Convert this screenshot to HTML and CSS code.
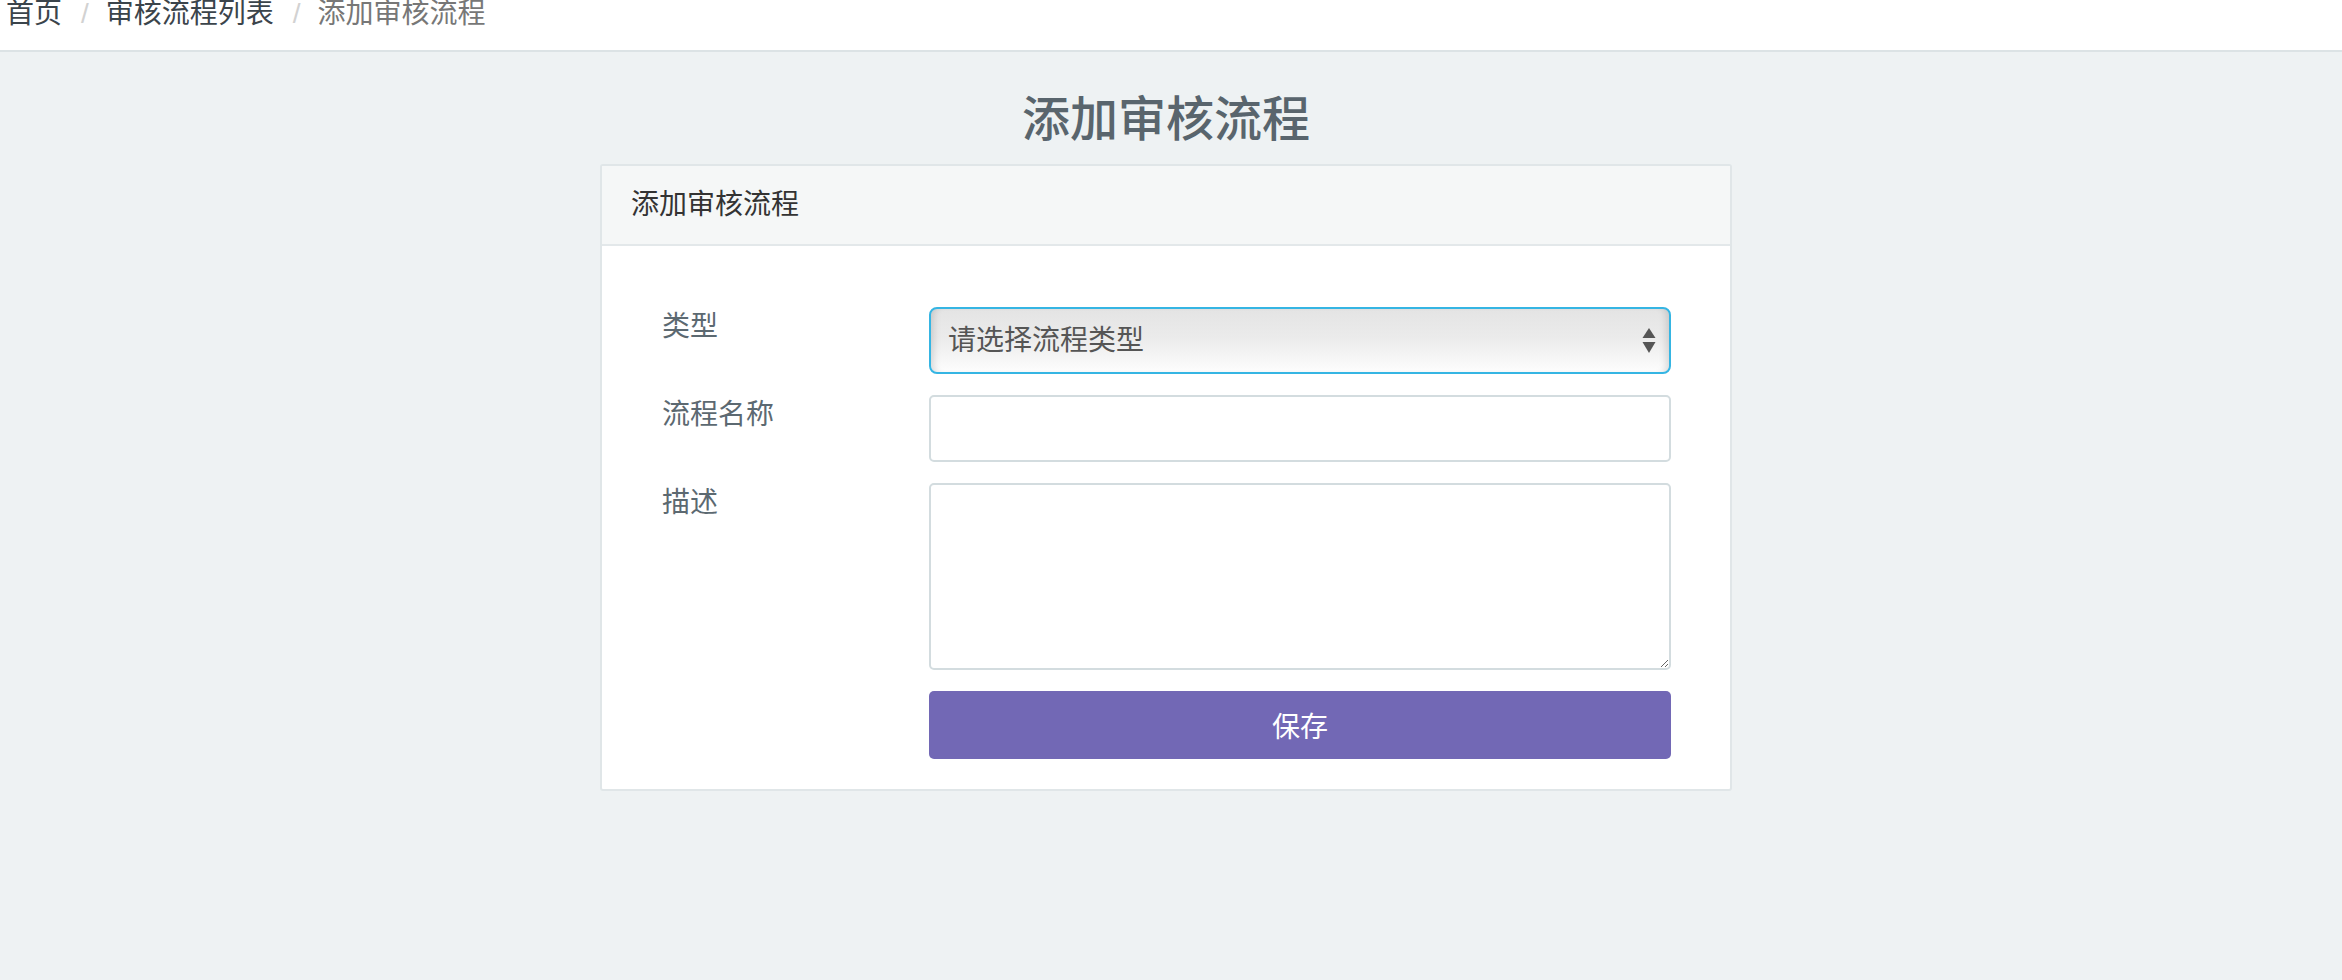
FILE: index.html
```html
<!DOCTYPE html>
<html lang="zh-CN">
<head>
    <meta charset="UTF-8">
    <meta name="viewport" content="width=device-width, initial-scale=1.0">
    <title>添加审核流程</title>
    <link rel="stylesheet" href="styles.css">
</head>
<body>
    <header class="topbar">
        <ol class="breadcrumb">
            <li><a href="#">首页</a></li>
            <li><a href="#">审核流程列表</a></li>
            <li class="active">添加审核流程</li>
        </ol>
    </header>

    <main class="page">
        <h1 class="page-title">添加审核流程</h1>

        <div class="panel">
            <div class="panel-heading">添加审核流程</div>
            <form class="panel-body" onsubmit="return false">
                <div class="form-row">
                    <label class="form-label" for="type">类型</label>
                    <div class="select-wrap">
                        <select id="type" class="form-select">
                            <option>请选择流程类型</option>
                        </select>
                        <svg class="select-arrows" width="14" height="26" viewBox="0 0 14 26">
                            <path d="M7 0 L13.5 10 L0.5 10 Z" fill="#555"/>
                            <path d="M0.5 14 L13.5 14 L7 25 Z" fill="#555"/>
                        </svg>
                    </div>
                </div>
                <div class="form-row">
                    <label class="form-label" for="name">流程名称</label>
                    <input id="name" class="form-input" type="text">
                </div>
                <div class="form-row">
                    <label class="form-label" for="desc">描述</label>
                    <textarea id="desc" class="form-input form-textarea"></textarea>
                </div>
                <div class="form-row">
                    <span class="form-label"></span>
                    <button class="btn-save" type="submit">保存</button>
                </div>
            </form>
        </div>
    </main>
</body>
</html>
```

FILE: styles.css
```css
* {
    margin: 0;
    padding: 0;
    box-sizing: border-box;
}
html, body {
    width: 100%;
    height: 100%;
}
body {
    background: #eef2f3;
    font-family: "Liberation Sans", "Noto Sans CJK SC", sans-serif;
    font-size: 28px;
    color: #333;
    overflow: hidden;
}

/* top breadcrumb bar */
.topbar {
    height: 52px;
    background: #fff;
    border-bottom: 2px solid #dce3e5;
}
.breadcrumb {
    display: flex;
    list-style: none;
    line-height: 28px;
    padding-left: 6px;
}
.breadcrumb a {
    color: #3b444b;
    text-decoration: none;
}
.breadcrumb li + li::before {
    content: "/";
    display: inline-block;
    padding: 0 17px 0 19px;
    color: #d2d2d2;
}
.breadcrumb .active {
    color: #777;
}

/* page */
.page {
    width: 1132px;
    margin-left: 600px;
}
.page-title {
    font-size: 48px;
    font-weight: 500;
    line-height: 58px;
    color: #59656d;
    text-align: center;
    margin: 39px 0 15px;
}

.panel {
    background: #fff;
    border: 2px solid #e0e6e8;
    border-radius: 3px;
}
.panel-heading {
    background: #f5f7f7;
    border-bottom: 2px solid #e3e8ea;
    padding: 19px 29px;
    line-height: 40px;
    color: #333;
}
.panel-body {
    display: flex;
    flex-direction: column;
    gap: 21px;
    padding: 61px 59px 30px 60px;
}
.form-row {
    display: grid;
    grid-template-columns: 267px 742px;
}
.form-label {
    line-height: 40px;
    color: #5c6971;
}

.select-wrap {
    position: relative;
}
.form-select {
    appearance: none;
    -webkit-appearance: none;
    display: block;
    width: 100%;
    height: 67px;
    padding: 0 50px 0 17px;
    font: inherit;
    color: #555;
    border: 2px solid #35b5e3;
    border-radius: 8px;
    outline: none;
    background: linear-gradient(#e4e4e4, #ebebeb 45%, #fdfdfd);
    box-shadow: inset 8px 0 7px -5px rgba(0, 0, 0, 0.13), inset -8px 0 7px -5px rgba(0, 0, 0, 0.13);
}
.select-arrows {
    position: absolute;
    right: 15px;
    top: 21px;
    pointer-events: none;
}

.form-input {
    display: block;
    width: 100%;
    height: 67px;
    padding: 0 17px;
    font: inherit;
    color: #555;
    background: #fff;
    border: 2px solid #d3dcdf;
    border-radius: 5px;
    outline: none;
}
.form-textarea {
    height: 187px;
    padding: 10px 17px;
    resize: vertical;
}

.btn-save {
    height: 68px;
    font: inherit;
    color: #fff;
    background: #7268b5;
    border: none;
    border-radius: 5px;
    cursor: pointer;
}
```
